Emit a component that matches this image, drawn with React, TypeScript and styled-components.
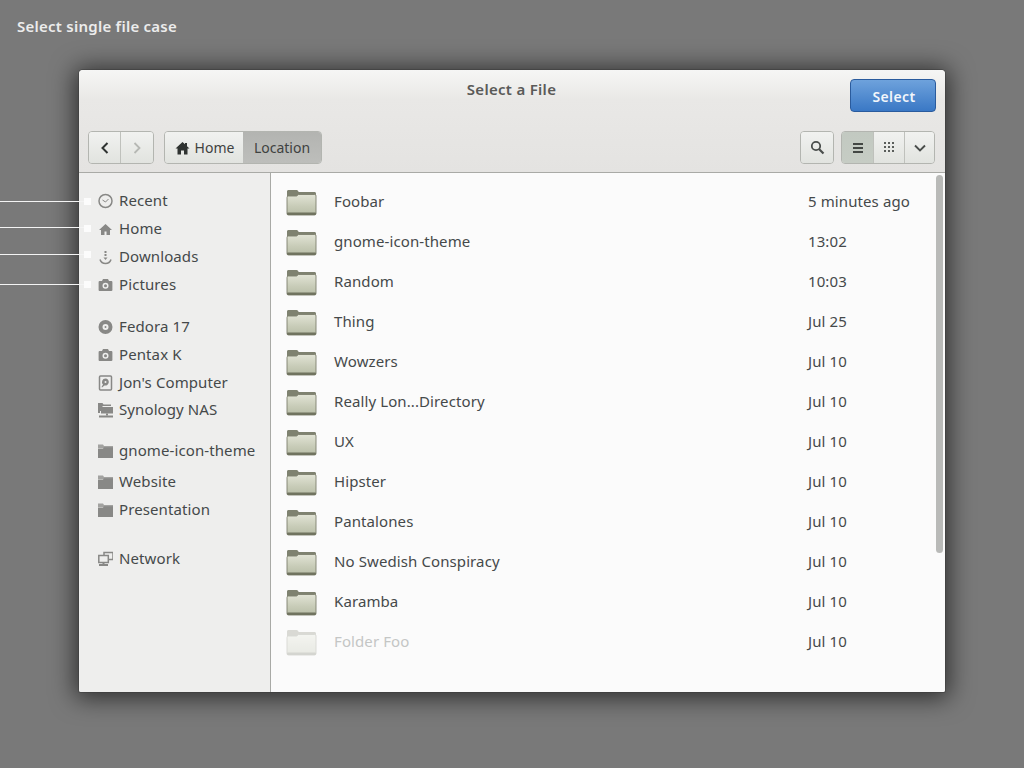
import React from "react";
import styled, { createGlobalStyle } from "styled-components";

const Global = createGlobalStyle`
  html, body { margin: 0; padding: 0; width: 1024px; height: 768px; overflow: hidden; background: #797979; }
  body { font-family: "Noto Sans", "Open Sans", sans-serif; }
`;

const Page = styled.div`
  position: relative;
  width: 1024px;
  height: 768px;
  background: #797979;
  overflow: hidden;
`;
const Caption = styled.h1`
  margin: 0;
  height: 70px;
  box-sizing: border-box;
  padding: 16px 0 0 17px;
  font-size: 15px;
  line-height: 20px;
  font-weight: 600;
  color: #ececec;
  letter-spacing: 0.25px;
`;
const Window = styled.div`
  width: 866px;
  height: 622px;
  margin-left: 79px;
  border-radius: 4px 4px 2px 2px;
  background: #ededeb;
  box-shadow: 0 0 0 1px rgba(60, 60, 60, 0.5), 0 2px 24px 4px rgba(0, 0, 0, 0.62);
  display: flex;
  flex-direction: column;
  overflow: hidden;
`;
const Header = styled.header`
  height: 103px;
  flex: none;
  box-sizing: border-box;
  border-bottom: 1px solid #a9aaa6;
  background: linear-gradient(#f6f6f5 0, #e9e8e6 30px, #e4e3e1 100%);
  display: flex;
  flex-direction: column;
`;
const TitleRow = styled.div`
  height: 61px;
  flex: none;
  box-sizing: border-box;
  padding: 9px 9px 0 0;
  position: relative;
  display: flex;
  justify-content: flex-end;
  align-items: flex-start;
`;
const Title = styled.div`
  position: absolute;
  left: 0;
  right: 0;
  top: 9px;
  text-align: center;
  font-size: 15px;
  line-height: 20px;
  font-weight: 600;
  color: #5a5a58;
  letter-spacing: 0.3px;
  padding-right: 1px;
`;
const SelectButton = styled.button`
  width: 86px;
  height: 33px;
  box-sizing: border-box;
  border: 1px solid #2a5b9d;
  border-radius: 4px;
  background: linear-gradient(#6ea2dc, #3a78c5);
  color: #f2f6fb;
  font-family: inherit;
  font-size: 14px;
  font-weight: 600;
  letter-spacing: 0.4px;
  padding: 1px 0 0 2px;
`;
const Toolbar = styled.div`
  display: flex;
  align-items: flex-start;
  padding: 0 10px 0 9px;
`;
const Group = styled.div<{ $ml?: number }>`
  display: flex;
  height: 33px;
  box-sizing: border-box;
  margin-left: ${(p) => p.$ml ?? 0}px;
  border: 1px solid #b3b5b0;
  border-radius: 4px;
  overflow: hidden;
`;
const Spacer = styled.div`
  flex: 1;
`;
const ToolButton = styled.div<{ $w: number; $active?: boolean; $sep?: boolean }>`
  width: ${(p) => p.$w}px;
  flex: none;
  display: flex;
  align-items: center;
  justify-content: center;
  box-sizing: border-box;
  border-left: ${(p) => (p.$sep ? "1px solid #bfc1bc" : "none")};
  background: ${(p) =>
    p.$active ? "linear-gradient(#c2c9c1, #c6ccc4)" : "linear-gradient(#f1f2f0, #e1e3df)"};
`;
const PathHome = styled(ToolButton)`
  gap: 5px;
  font-size: 14px;
  color: #3f4241;
  padding-left: 1px;
`;
const PathLocation = styled.div`
  width: 78px;
  flex: none;
  display: flex;
  align-items: center;
  justify-content: center;
  font-size: 14px;
  color: #3f4241;
  background: linear-gradient(#b3b4b1, #bdbebb);
`;
const Body = styled.div`
  flex: 1;
  display: flex;
  min-height: 0;
`;
const Sidebar = styled.nav`
  width: 192px;
  flex: none;
  box-sizing: border-box;
  padding-top: 13px;
  background: #eeeeed;
  border-right: 1px solid #a9aaa6;
`;
const Place = styled.div<{ $h: number; $mt?: number }>`
  height: ${(p) => p.$h}px;
  margin-top: ${(p) => p.$mt ?? 0}px;
  display: flex;
  align-items: center;
  padding-left: 19px;
  gap: 6px;
  font-size: 15px;
  color: #45494a;
  letter-spacing: 0.1px;
  white-space: nowrap;
`;
const PlaceIcon = styled.svg`
  width: 15px;
  height: 16px;
  flex: none;
  margin-top: 2px;
  color: #888886;
`;
const Files = styled.main`
  flex: 1;
  background: #fbfbfb;
  position: relative;
  padding-top: 8px;
  min-width: 0;
`;
const FileRow = styled.div<{ $faded?: boolean }>`
  height: 40px;
  display: grid;
  grid-template-columns: 48px 474px 1fr;
  align-items: center;
  padding-left: 15px;
  font-size: 15px;
  color: #45494a;
  letter-spacing: 0.1px;
`;
const FileName = styled.span<{ $faded?: boolean }>`
  color: ${(p) => (p.$faded ? "#c4c6c5" : "#45494a")};
`;
const FolderSvg = styled.svg<{ $faded?: boolean }>`
  width: 31px;
  height: 29px;
  margin-top: 1px;
  opacity: ${(p) => (p.$faded ? 0.27 : 1)};
`;
const ScrollThumb = styled.div`
  position: absolute;
  top: 2px;
  right: 2px;
  width: 7px;
  height: 378px;
  border-radius: 4px;
  background: #b9bab8;
`;
const Leader = styled.div<{ $y: number; $w: number; $dotY: number }>`
  position: absolute;
  left: 0;
  top: ${(p) => p.$y}px;
  width: ${(p) => p.$w}px;
  height: 1px;
  background: #f4f4f4;
  &::after {
    content: "";
    position: absolute;
    left: 84px;
    top: ${(p) => p.$dotY}px;
    width: 7px;
    height: 7px;
    background: #fcfcfc;
  }
`;

const Folder = ({ faded }: { faded?: boolean }) => (
  <FolderSvg $faded={faded} viewBox="0 0 31 29">
    <defs>
      <linearGradient id="fg" x1="0" y1="0" x2="0" y2="1">
        <stop offset="0" stopColor="#e2e4d6" />
        <stop offset="0.55" stopColor="#c9cdb9" />
        <stop offset="1" stopColor="#b8bda7" />
      </linearGradient>
    </defs>
    <path d="M1 4.5C1 3.6 1.6 3 2.5 3h8c.8 0 1.2.4 1.6 1l.6 1H28.500C29.400 5 30 5.600 30 6.500V12H1Z" fill="#7f8270" />
    <path d="M1 10.500C1 9.600 1.600 9 2.500 9h8l2-1.500H28.500C29.400 7.500 30 8.100 30 9V26.500C30 27.400 29.400 28 28.500 28H2.500C1.600 28 1 27.400 1 26.500Z" fill="url(#fg)" stroke="#7d806d" strokeWidth="0.9" />
    <rect x="1" y="25.500" width="29" height="2.500" rx="1" fill="#70735f" />
  </FolderSvg>
);

type IconKind = "clock" | "home" | "down" | "camera" | "disc" | "computer" | "nas" | "folder" | "network";

const PLACE_PATHS: Record<IconKind, React.ReactNode> = {
  clock: (
    <>
      <circle cx="7.500" cy="8" r="6.500" fill="none" stroke="currentColor" strokeWidth="1.500" />
      <path d="M4.500 7l3 2 3-3" fill="none" stroke="currentColor" strokeWidth="1" />
    </>
  ),
  home: <path d="M7.500 3L1 9h2v5h3.500v-3.500h2V14H12V9h2Z" fill="currentColor" />,
  down: (
    <>
      <rect x="6.500" y="2" width="2" height="2" fill="currentColor" />
      <rect x="6.500" y="5" width="2" height="2" fill="currentColor" />
      <path d="M5.500 8.500h4L7.500 11Z" fill="currentColor" />
      <path d="M2 10.500c1 3 3 4 5.500 4s4.500-1 5.500-4" fill="none" stroke="currentColor" strokeWidth="1.500" />
    </>
  ),
  camera: (
    <path
      fillRule="evenodd"
      d="M1.500 4H4l1-2h5l1 2h2.500c.5 0 .9.400.9.900v8.200c0 .5-.4.900-.9.900h-12c-.5 0-.9-.4-.9-.9V4.900c0-.5.4-.9.900-.9ZM7.500 5.800a3 3 0 1 0 0 6 3 3 0 0 0 0-6ZM7.500 7.300a1.500 1.500 0 1 1 0 3 1.500 1.500 0 0 1 0-3Z"
      fill="currentColor"
    />
  ),
  disc: (
    <path
      fillRule="evenodd"
      d="M7.500 1a7 7 0 1 1 0 14 7 7 0 0 1 0-14ZM7.500 5a3 3 0 1 0 0 6 3 3 0 0 0 0-6ZM7.500 7a1 1 0 1 1 0 2 1 1 0 0 1 0-2Z"
      fill="currentColor"
    />
  ),
  computer: (
    <>
      <rect x="1.500" y="1" width="12" height="14" rx="1" fill="none" stroke="currentColor" strokeWidth="1.500" />
      <path fillRule="evenodd" d="M7.500 3.500a3.500 3.500 0 1 1-1 6.900L4 12.500 3.500 12l1.500-2.500a3.500 3.500 0 0 1 2.500-6ZM7.500 6a1 1 0 1 0 0 2 1 1 0 0 0 0-2Z" fill="currentColor" />
    </>
  ),
  nas: (
    <>
      <path d="M0 1h4.500l1 1.500H13V4H4.500v5H2v2H0Z" fill="currentColor" />
      <rect x="3" y="5" width="12" height="6.500" fill="currentColor" />
      <rect x="8" y="11.500" width="2" height="2" fill="currentColor" />
      <rect x="1" y="13.500" width="14" height="2" fill="currentColor" />
    </>
  ),
  folder: (
    <>
      <path d="M0 1.500h5l1 1.500h9v2H0Z" fill="currentColor" opacity="0.75" />
      <path d="M0 5.500h5l1-1.200h9V15H0Z" fill="currentColor" />
    </>
  ),
  network: (
    <>
      <rect x="6" y="1.500" width="9" height="7" fill="none" stroke="currentColor" strokeWidth="1.500" />
      <rect x="0.800" y="4.500" width="9.500" height="7" fill="#eeeeed" stroke="currentColor" strokeWidth="1.500" />
      <rect x="1" y="13" width="9" height="2" fill="currentColor" />
      <rect x="4.500" y="11" width="2" height="2" fill="currentColor" />
    </>
  ),
};

const places: { label: string; icon: IconKind; h: number; mt?: number }[] = [
  { label: "Recent", icon: "clock", h: 28 },
  { label: "Home", icon: "home", h: 28 },
  { label: "Downloads", icon: "down", h: 28 },
  { label: "Pictures", icon: "camera", h: 28 },
  { label: "Fedora 17", icon: "disc", h: 28, mt: 14 },
  { label: "Pentax K", icon: "camera", h: 28 },
  { label: "Jon's Computer", icon: "computer", h: 27 },
  { label: "Synology NAS", icon: "nas", h: 27 },
  { label: "gnome-icon-theme", icon: "folder", h: 28, mt: 14 },
  { label: "Website", icon: "folder", h: 28, mt: 3 },
  { label: "Presentation", icon: "folder", h: 28 },
  { label: "Network", icon: "network", h: 28, mt: 21 },
];

const files: [string, string, boolean?][] = [
  ["Foobar", "5 minutes ago"],
  ["gnome-icon-theme", "13:02"],
  ["Random", "10:03"],
  ["Thing", "Jul 25"],
  ["Wowzers", "Jul 10"],
  ["Really Lon...Directory", "Jul 10"],
  ["UX", "Jul 10"],
  ["Hipster", "Jul 10"],
  ["Pantalones", "Jul 10"],
  ["No Swedish Conspiracy", "Jul 10"],
  ["Karamba", "Jul 10"],
  ["Folder Foo", "Jul 10", true],
];

const leaders = [
  { y: 201, dotY: -3 },
  { y: 227, dotY: -2 },
  { y: 254, dotY: -3 },
  { y: 284, dotY: -3 },
];

export default function App() {
  return (
    <Page>
      <Global />
      <Caption>Select single file case</Caption>
      <Window>
        <Header>
          <TitleRow>
            <Title>Select a File</Title>
            <SelectButton>Select</SelectButton>
          </TitleRow>
          <Toolbar>
            <Group>
              <ToolButton $w={31}>
                <svg width="10" height="14" viewBox="0 0 10 14">
                  <path d="M7.500 2L2.500 7l5 5" fill="none" stroke="#2f3331" strokeWidth="2" />
                </svg>
              </ToolButton>
              <ToolButton $w={33} $sep>
                <svg width="10" height="14" viewBox="0 0 10 14">
                  <path d="M2.500 2l5 5-5 5" fill="none" stroke="#b6b8b4" strokeWidth="1.800" />
                </svg>
              </ToolButton>
            </Group>
            <Group $ml={10}>
              <PathHome $w={78}>
                <svg width="15" height="14" viewBox="0 0 15 14">
                  <path d="M7.500 1L0.500 7.500h2V13.500h3.500V9.500h3v4H12.500V7.500h2L12 5.200V2h-2v1.200Z" fill="#2f3331" />
                </svg>
                Home
              </PathHome>
              <PathLocation>Location</PathLocation>
            </Group>
            <Spacer />
            <Group>
              <ToolButton $w={32}>
                <svg width="15" height="15" viewBox="0 0 15 15">
                  <circle cx="6" cy="6" r="4.200" fill="none" stroke="#4a4e4c" strokeWidth="1.800" />
                  <path d="M9 9l4.500 4.500" stroke="#4a4e4c" strokeWidth="2.200" />
                </svg>
              </ToolButton>
            </Group>
            <Group $ml={7}>
              <ToolButton $w={31} $active>
                <svg width="12" height="12" viewBox="0 0 12 12">
                  <path d="M1 2h10M1 6h10M1 10h10" stroke="#434744" strokeWidth="1.800" />
                </svg>
              </ToolButton>
              <ToolButton $w={31} $sep>
                <svg width="11" height="11" viewBox="0 0 11 11" fill="#5a5e5b">
                  {[0, 4, 8].flatMap((x) =>
                    [0, 4, 8].map((y) => <rect key={`${x}-${y}`} x={x} y={y} width="2" height="2" />)
                  )}
                </svg>
              </ToolButton>
              <ToolButton $w={30} $sep>
                <svg width="14" height="10" viewBox="0 0 14 10">
                  <path d="M2 2.500l5 5 5-5" fill="none" stroke="#4a4e4c" strokeWidth="1.900" />
                </svg>
              </ToolButton>
            </Group>
          </Toolbar>
        </Header>
        <Body>
          <Sidebar>
            {places.map((p) => (
              <Place key={p.label} $h={p.h} $mt={p.mt}>
                <PlaceIcon viewBox="0 0 15 16">{PLACE_PATHS[p.icon]}</PlaceIcon>
                {p.label}
              </Place>
            ))}
          </Sidebar>
          <Files>
            {files.map(([name, date, faded]) => (
              <FileRow key={name}>
                <Folder faded={faded} />
                <FileName $faded={faded}>{name}</FileName>
                <span>{date}</span>
              </FileRow>
            ))}
            <ScrollThumb />
          </Files>
        </Body>
      </Window>
      {leaders.map((l) => (
        <Leader key={l.y} $y={l.y} $w={85} $dotY={l.dotY} />
      ))}
    </Page>
  );
}
